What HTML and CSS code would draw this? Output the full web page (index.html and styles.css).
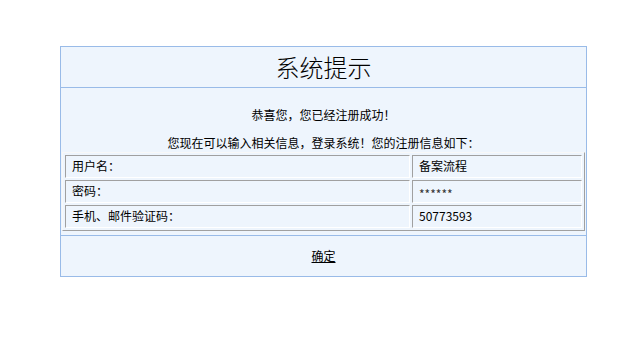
FILE: index.html
```html
<!DOCTYPE html>
<html>
<head>
<meta charset="utf-8">
<link rel="stylesheet" href="styles.css">
</head>
<body>
<div class="box">
  <div class="head">系统提示</div>
  <div class="main">
    <p class="msg first">恭喜您，您已经注册成功！</p>
    <p class="msg second">您现在可以输入相关信息，登录系统！您的注册信息如下：</p>
    <table class="info">
      <tr><td class="k">用户名：</td><td class="v">备案流程</td></tr>
      <tr><td class="k">密码：</td><td class="v pwd">******</td></tr>
      <tr><td class="k">手机、邮件验证码：</td><td class="v">50773593</td></tr>
    </table>
  </div>
  <div class="foot"><a class="ok" href="#">确定</a></div>
</div>
</body>
</html>
```

FILE: styles.css
```css
html, body {
  margin: 0;
  padding: 0;
  background: #fff;
}
body {
  font-family: "Noto Sans CJK SC", "Liberation Sans", sans-serif;
  font-size: 12px;
  color: #000;
}
.box {
  margin: 46px 0 0 60px;
  width: 525px;
  border: 1px solid #99bbe8;
  background: #eef5fd;
}
.head {
  height: 40px;
  line-height: 40px;
  text-align: center;
  font-size: 24px;
  border-bottom: 1px solid #99bbe8;
  font-family: "Noto Sans CJK SC", sans-serif;
  font-weight: 300;
}
.main {
  padding-top: 20px;
  padding-bottom: 4px;
  border-bottom: 1px solid #99bbe8;
}
.msg {
  margin: 0;
  text-align: center;
  line-height: 14px;
  height: 14px;
}
.second {
  margin-top: 14px;
}
.info {
  margin: 2px 1px 0 1px;
  width: 523px;
  border-collapse: separate;
  border-spacing: 2px;
  border-style: solid;
  border-width: 1px;
  border-color: #f8f8f8 #a0a0a0 #a0a0a0 #f8f8f8;
}
.info td {
  height: 21px;
  padding: 0 0 0 6px;
  border-style: solid;
  border-width: 1px;
  border-color: #a0a0a0 #fff #fff #a0a0a0;
  line-height: 20px;
  vertical-align: top;
}
.info td.k {
  width: 337px;
}
.info td.pwd {
  padding-top: 5px;
  height: 16px;
  line-height: 16px;
  color: #333;
}
.foot {
  height: 40px;
  line-height: 40px;
  text-align: center;
}
.ok {
  color: #000;
  text-decoration: underline;
}
```
